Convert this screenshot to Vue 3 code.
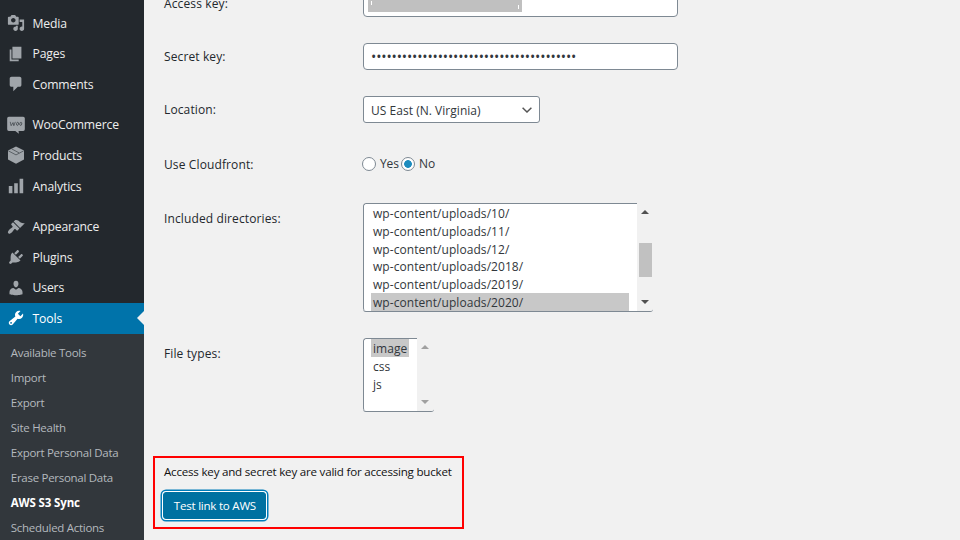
<script setup>
const groups = [
  [
    { name: 'Media', icon: 'M13 11V4c0-.55-.45-1-1-1h-1.67L9 1H5L3.67 3H2c-.55 0-1 .45-1 1v7c0 .55.45 1 1 1h10c.55 0 1-.45 1-1zM7 4.5c1.38 0 2.5 1.12 2.5 2.5S8.38 9.5 7 9.5 4.5 8.38 4.5 7 5.62 4.5 7 4.5zM14 6h5v10.5c0 1.38-1.12 2.5-2.5 2.5S14 17.88 14 16.5s1.12-2.5 2.5-2.5c.17 0 .34.02.5.05V9h-3V6zm-4 8.05V13h2v3.5c0 1.38-1.12 2.5-2.5 2.5S7 17.88 7 16.5 8.12 14 9.5 14c.17 0 .34.02.5.05z' },
    { name: 'Pages', icon: 'M6 15V2h10v13H6zm-1 1h8v2H3V5h2v11z' },
    { name: 'Comments', icon: 'M5 2h9c1.1 0 2 .9 2 2v7c0 1.1-.9 2-2 2h-2l-5 5v-5H5c-1.1 0-2-.9-2-2V4c0-1.1.9-2 2-2z' },
  ],
  [
    { name: 'WooCommerce', woo: true },
    { name: 'Products', box: true },
    { name: 'Analytics', icon: 'M18 18V2h-4v16h4zm-6 0V7H8v11h4zm-6 0v-8H2v8h4z' },
  ],
  [
    { name: 'Appearance', icon: 'M14.48 11.06L7.41 3.99l1.5-1.5c.5-.56 2.3-.47 3.51.32 1.21.8 1.43 1.28 2.91 2.1 1.18.64 2.45 1.26 4.45.85zm-.71.71L6.7 4.7 4.93 6.47c-.39.39-.39 1.02 0 1.41l1.06 1.06c.39.39.39 1.03 0 1.42-.6.6-1.43 1.11-2.21 1.69-.35.26-.7.53-1.01.84C1.43 14.23.4 16.08 1.4 17.07c.99 1 2.84-.03 4.18-1.36.31-.31.58-.66.85-1.02.57-.78 1.08-1.61 1.69-2.21.39-.39 1.02-.39 1.41 0l1.06 1.06c.39.39 1.02.39 1.41 0z' },
    { name: 'Plugins', icon: 'M13.11 4.36L9.87 7.6 8 5.73l3.24-3.24c.35-.34 1.05-.2 1.56.32.52.51.66 1.21.31 1.55zm-8 1.77l.91-1.12 9.01 9.01-1.19.84c-.71.71-2.63 1.16-3.82 1.16H6.14L4.9 17.26c-.59.59-1.54.59-2.12 0-.59-.58-.59-1.53 0-2.12l1.24-1.24v-3.88c0-1.13.4-3.19 1.09-3.89zm7.26 3.97l3.24-3.24c.34-.35 1.04-.21 1.55.31.52.51.66 1.21.31 1.55l-3.24 3.25z' },
    { name: 'Users', icon: 'M10 9.25c-2.27 0-2.73-3.44-2.73-3.44C7 4.02 7.82 2 9.97 2c2.16 0 2.98 2.02 2.71 3.81 0 0-.41 3.44-2.68 3.44zm0 2.57L12.72 10c2.39 0 4.52 2.33 4.52 4.53v2.49s-3.65 1.13-7.24 1.13c-3.65 0-7.24-1.13-7.24-1.13v-2.49c0-2.25 1.94-4.48 4.47-4.48z' },
    { name: 'Tools', active: true, icon: 'M16.68 9.77c-1.34 1.34-3.3 1.67-4.95.99l-5.41 6.52c-.99.99-2.59.99-3.58 0s-.99-2.59 0-3.57l6.52-5.42c-.68-1.65-.35-3.61.99-4.95 1.28-1.28 3.12-1.62 4.72-1.06l-2.89 2.89 2.82 2.82 2.86-2.87c.53 1.58.18 3.39-1.08 4.65zM3.81 16.21c.4.39 1.04.39 1.43 0 .4-.4.4-1.04 0-1.43-.39-.4-1.03-.4-1.43 0-.39.39-.39 1.03 0 1.43z' },
  ],
]
const submenu = ['Available Tools', 'Import', 'Export', 'Site Health', 'Export Personal Data', 'Erase Personal Data', 'AWS S3 Sync', 'Scheduled Actions']
const directories = ['10', '11', '12', '2018', '2019', '2020']
const fileTypes = ['image', 'css', 'js']
const secret = '•'.repeat(40)
</script>

<template>
  <div class="page">
    <nav class="sidebar">
      <ul v-for="(group, i) in groups" :key="i" class="group">
        <li v-for="item in group" :key="item.name" class="item" :class="{ active: item.active }">
          <svg v-if="item.woo" class="icon woo" viewBox="0 0 20 20">
            <path d="M2 .8h16a1.800 1.800 0 0 1 1.800 1.800v12.200a1.800 1.800 0 0 1-1.800 1.800h-5.200l.4 3-4-3H2a1.800 1.800 0 0 1-1.800-1.800V2.600A1.800 1.800 0 0 1 2 .8z" />
            <g class="woo-lines">
              <path d="M3.600 6.500l1 4.300L6.700 7.300l.9 3.500L9.300 6.500" />
              <ellipse cx="11.700" cy="8.700" rx="1.100" ry="1.800" transform="rotate(14 11.700 8.700)" />
              <ellipse cx="15.300" cy="8.700" rx="1.100" ry="1.800" transform="rotate(14 15.300 8.700)" />
            </g>
          </svg>
          <svg v-else-if="item.box" class="icon" viewBox="0 0 20 20">
            <path d="M10 .6L18.900 4.900v10L10 19.600 1.100 14.900v-10z" />
            <path class="seams" d="M1.500 5.400L10 9.900l8.500-4.500M5.200 3.200l8.300 4.500" />
          </svg>
          <svg v-else class="icon" viewBox="0 0 20 20"><path :d="item.icon" /></svg>
          <span>{{ item.name }}</span>
        </li>
      </ul>
      <ul class="submenu">
        <li v-for="s in submenu" :key="s" :class="{ current: s === 'AWS S3 Sync' }">{{ s }}</li>
      </ul>
    </nav>

    <main class="main">
      <div class="row access">
        <label>Access key:</label>
        <div class="field"><div class="redaction"><i class="tick-start"></i><i class="tick-end"></i></div></div>
      </div>
      <div class="row">
        <label>Secret key:</label>
        <div class="field"><span class="dots">{{ secret }}</span></div>
      </div>
      <div class="row location">
        <label>Location:</label>
        <div class="select">
          <span>US East (N. Virginia)</span>
          <svg class="chevron" viewBox="0 0 10 6"><path d="M.6.8L5 5 9.400.8" /></svg>
        </div>
      </div>
      <div class="row cloudfront">
        <label>Use Cloudfront:</label>
        <div class="radios">
          <span class="radio"></span><span class="yes">Yes</span>
          <span class="radio checked"></span><span>No</span>
        </div>
      </div>
      <div class="row directories">
        <label>Included directories:</label>
        <div class="listbox wide">
          <ul class="options">
            <li v-for="d in directories" :key="d" :class="{ selected: d === '2020' }"><span>wp-content/uploads/{{ d }}/</span></li>
          </ul>
          <div class="scroll">
            <svg viewBox="0 0 8 4"><path d="M4 0l4 4H0z" /></svg>
            <div class="thumb"></div>
            <svg viewBox="0 0 8 4"><path d="M0 0h8L4 4z" /></svg>
          </div>
        </div>
      </div>
      <div class="row types">
        <label>File types:</label>
        <div class="listbox small">
          <ul class="options">
            <li v-for="t in fileTypes" :key="t" :class="{ selected: t === 'image' }"><span>{{ t }}</span></li>
          </ul>
          <div class="scroll">
            <svg viewBox="0 0 8 4"><path d="M4 0l4 4H0z" /></svg>
            <svg viewBox="0 0 8 4"><path d="M0 0h8L4 4z" /></svg>
          </div>
        </div>
      </div>
      <section class="result">
        <p>Access key and secret key are valid for accessing bucket</p>
        <button type="button">Test link to AWS</button>
      </section>
    </main>
  </div>
</template>

<style>
body { background: #f1f1f1; }
</style>

<style scoped>
.page {
  display: flex;
  width: 960px;
  height: 540px;
  overflow: hidden;
  background: #f1f1f1;
  font-family: "Open Sans", "Noto Sans", sans-serif;
  font-size: 12px;
  color: #32373c;
}
ul { list-style: none; margin: 0; padding: 0; }
.sidebar {
  width: 144px;
  flex: none;
  display: flex;
  flex-direction: column;
  background: #23282d;
  padding-top: 7.7px;
  box-sizing: border-box;
}
.group + .group { margin-top: 10px; }
.item {
  display: flex;
  align-items: center;
  height: 30.6px;
  padding-left: 7px;
  gap: 7.500px;
  color: #eee;
  font-size: 12.200px;
  font-weight: 500;
  letter-spacing: -.14px;
  white-space: nowrap;
}
.item span { padding-top: .3px; }
.icon { width: 18px; height: 18px; fill: #a0a5aa; flex: none; }
.woo-lines { fill: none; stroke: #3c4247; stroke-width: .8; }
.woo-lines path { fill: none; }
.seams { fill: none; stroke: #4a5055; stroke-width: .9; }
.item.active { background: #0073aa; color: #fff; position: relative; }
.item.active .icon { fill: #fff; }
.item.active::after {
  content: "";
  position: absolute;
  right: 0;
  top: 8px;
  border: 7px solid transparent;
  border-left-width: 0;
  border-right-color: #f1f1f1;
}
.submenu { flex: 1; background: #32373c; padding-top: 6.300px; }
.submenu li {
  height: 25px;
  line-height: 25px;
  padding-left: 10.800px;
  font-size: 11.500px;
  font-weight: 500;
  letter-spacing: -.28px;
  color: #b4b9be;
  white-space: nowrap;
}
.submenu .current { color: #fff; font-weight: 700; letter-spacing: -.14px; }

.main { flex: 1; min-width: 0; }
.row {
  display: grid;
  grid-template-columns: 199px 1fr;
  align-items: start;
  height: 53px;
  padding-left: 20px;
}
.row label { line-height: 27px; font-weight: 500; color: #23282d; letter-spacing: .12px; }
.access { margin-top: -10px; }
.location { height: 54px; }
.cloudfront label { padding-top: 1px; }
.directories { height: 135px; }
.types { height: 118px; }
.directories label, .types label { padding-top: 2px; }
.field, .select {
  box-sizing: border-box;
  height: 27px;
  border: 1px solid #7e8993;
  border-radius: 4px;
  background: #fff;
  display: flex;
  align-items: center;
}
.field { width: 315px; padding-left: 7px; overflow: hidden; }
.access .field { align-items: flex-start; padding-left: 4px; }
.redaction {
  display: flex;
  justify-content: space-between;
  align-items: flex-end;
  box-sizing: border-box;
  width: 154px;
  height: 21px;
  padding: 0 3px 3px;
  background: #c0c0c0;
}
.redaction i { width: 1px; height: 4px; background: #fff; }
.redaction .tick-start { margin-bottom: 4px; }
.dots { font-size: 14px; letter-spacing: -.135px; line-height: 16px; white-space: nowrap; }
.select { width: 177px; justify-content: space-between; padding: 1px 7px 0 7px; border-radius: 3px; letter-spacing: .03px; }
.chevron { width: 10px; height: 6px; fill: none; stroke: #555; stroke-width: 1.500; }
.radios { display: flex; align-items: center; height: 27px; margin-left: -1px; gap: 4px; }
.radio {
  box-sizing: border-box;
  width: 14px;
  height: 14px;
  border: 1px solid #7e8993;
  border-radius: 50%;
  background: #fff;
}
.radio.checked { background: radial-gradient(circle, #1e8cbe 0 3.500px, #fff 4.200px); }
.yes { margin-right: -2px; letter-spacing: -.1px; }
.listbox {
  display: flex;
  box-sizing: border-box;
  border-bottom: 1px solid #7e8993;
  border-radius: 3px;
  overflow: hidden;
}
.listbox.wide { width: 290px; height: 109px; }
.listbox.small { width: 71px; height: 74px; }
.options {
  flex: 1;
  box-sizing: border-box;
  border: solid #7e8993;
  border-width: 1px 0 0 1px;
  border-radius: 3px 0 0 3px;
  background: #fff;
  padding: 0 8px 0 7px;
}
.options li { height: 17.800px; line-height: 19.600px; padding-left: 2px; letter-spacing: .06px; white-space: nowrap; }
.options li.selected { background: #c8c8c8; }
.scroll {
  display: flex;
  flex-direction: column;
  align-items: center;
  justify-content: space-between;
  box-sizing: border-box;
  width: 16px;
  padding: 7px 0 7px;
}
.scroll svg { width: 8px; height: 4px; fill: #505050; }
.small .scroll { width: 17px; padding-right: 1px; }
.small .scroll svg { fill: #a0a0a0; }
.thumb { width: 13px; height: 34px; background: #c1c1c1; margin-top: 5px; }
.result {
  box-sizing: border-box;
  width: 311px;
  height: 73px;
  margin-left: 9px;
  border: 2px solid #f00;
  padding: 5px 0 0 8px;
}
.result p { margin: 0 0 0 1px; line-height: 18px; font-size: 11.600px; letter-spacing: -.22px; color: #111; white-space: nowrap; }
.result button {
  display: block;
  box-sizing: border-box;
  width: 103px;
  height: 27px;
  margin: 11px 0 0 .400px;
  padding: 0;
  border: 1px solid #0071a1;
  border-radius: 3px;
  background: #0071a1;
  box-shadow: 0 0 0 1px #fff, 0 0 0 2.500px #007cba;
  color: #fff;
  font: 500 11.600px "Open Sans", "Noto Sans", sans-serif;
  letter-spacing: -.25px;
}
</style>
